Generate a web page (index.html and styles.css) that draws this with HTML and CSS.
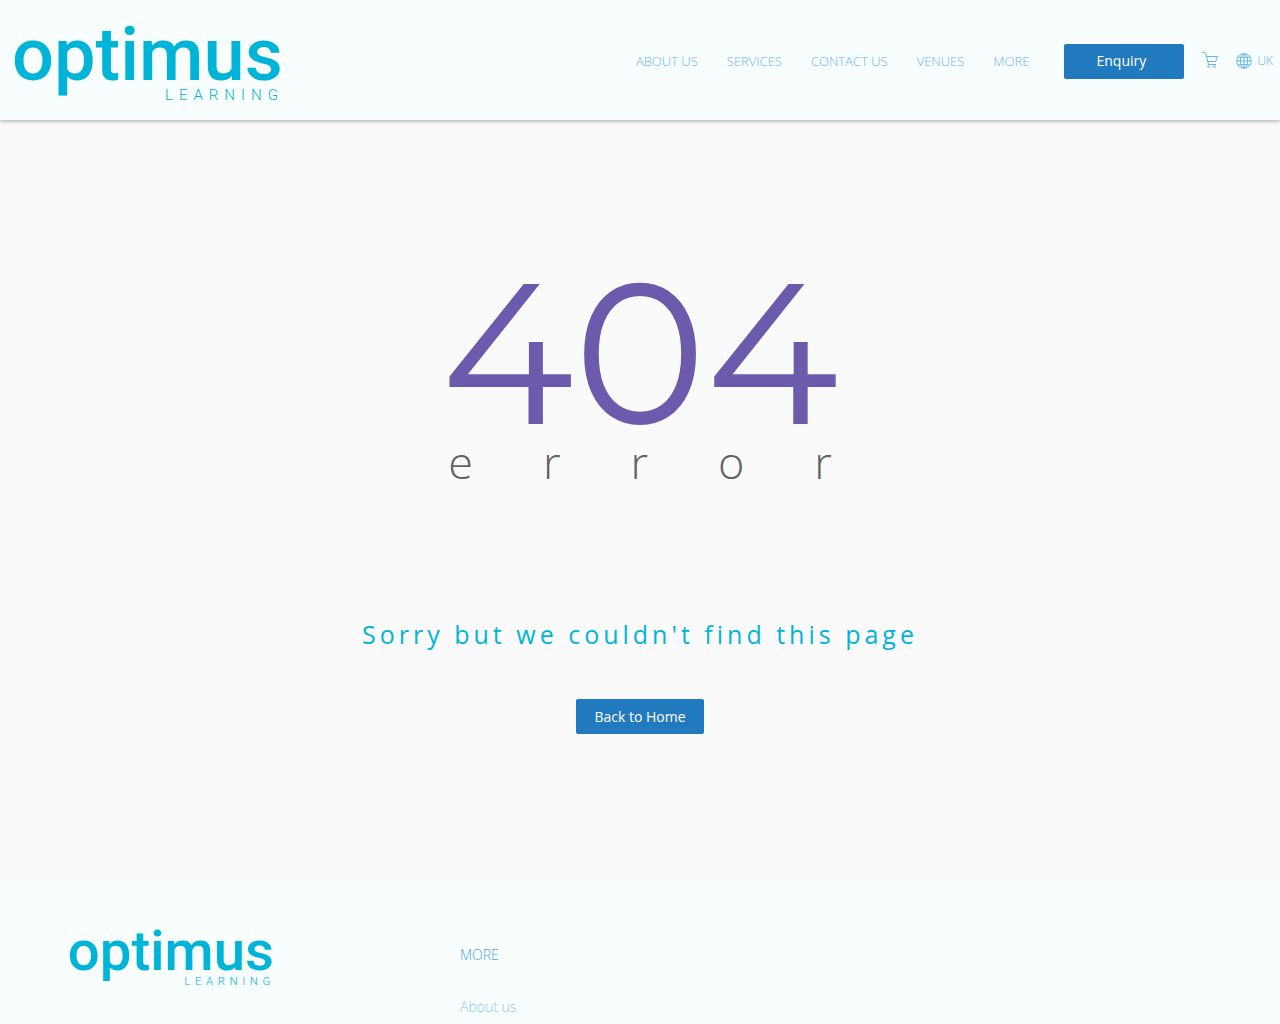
FILE: index.html
```html
<!DOCTYPE html>
<html lang="en">
<head>
    <meta charset="UTF-8">
    <meta name="viewport" content="width=device-width, initial-scale=1.0">
    <title>Page not found | Optimus Learning</title>
    <link rel="stylesheet" href="styles.css">
</head>
<body>
    <header class="header">
        <a class="logo" href="#">
            <svg viewBox="0 0 265 80" role="img" aria-label="Optimus Learning">
                <text class="logo-name" x="-3" y="60">optimus</text>
                <text class="logo-sub" x="150" y="80">LEARNING</text>
            </svg>
        </a>

        <nav class="nav">
            <a href="#">ABOUT US</a>
            <a href="#">SERVICES</a>
            <a href="#">CONTACT US</a>
            <a href="#">VENUES</a>
            <a href="#">MORE</a>
        </nav>

        <button class="btn btn-enquiry" type="button">Enquiry</button>

        <a class="cart" href="#" aria-label="Basket">
            <svg class="icon" viewBox="0 0 16 16">
                <path d="M0 .5h2.500q1 0 1.300 1L6.500 12.500h7.500M4.300 4.500h11.200l-1.800 5H5.800"/>
                <circle cx="6.500" cy="14.500" r="1"/>
                <circle cx="12.500" cy="14.500" r="1"/>
            </svg>
        </a>

        <a class="region" href="#">
            <svg class="icon" viewBox="0 0 16 16">
                <circle cx="8" cy="8" r="7.300"/>
                <ellipse cx="8" cy="8" rx="3.700" ry="7.300"/>
                <path d="M8 .7v14.600M.7 8h14.600M2 4.300h12M2 11.700h12"/>
            </svg>
            UK
        </a>
    </header>

    <!-- Error message -->
    <main class="error-page">
        <h1 class="error-code">404</h1>
        <p class="error-word">error</p>
        <h2 class="error-text">Sorry but we couldn't find this page</h2>
        <a class="btn" href="#">Back to Home</a>
    </main>

    <footer class="footer">
        <div class="container">
            <a class="logo logo-small" href="#">
                <svg viewBox="0 0 265 80" role="img" aria-label="Optimus Learning">
                    <text class="logo-name" x="-3" y="60">optimus</text>
                    <text class="logo-sub" x="150" y="80">LEARNING</text>
                </svg>
            </a>
            <div class="footer-links">
                <h3>MORE</h3>
                <a href="#">About us</a>
            </div>
        </div>
    </footer>
</body>
</html>
```
FILE: styles.css
```css
* {
    box-sizing: border-box;
}
body {
    font-family: "Open Sans", sans-serif;
    font-size: 14px;
    line-height: 20px;
    font-weight: 300;
    margin: 0;
    background-color: #fafafa;
}
a {
    color: #6bb5e6;
    text-decoration: none;
}
.header {
    display: flex;
    align-items: center;
    min-height: 120px;
    padding: 0 7px 0 15px;
    background-color: #f8fdfd;
    box-shadow: 0 1px 4px rgba(0, 0, 0, 0.35);
}
.logo {
    width: 265px;
}
.logo svg {
    display: block;
    width: 100%;
    overflow: visible;
}
.logo-small {
    width: 202px;
}
.logo-name {
    font-family: Roboto, sans-serif;
    font-size: 74px;
    font-weight: 500;
    fill: #00b4d8;
}
.logo-sub {
    font-family: Roboto, sans-serif;
    font-size: 15px;
    font-weight: 300;
    letter-spacing: 6px;
    fill: #00b4d8;
}
.nav {
    display: flex;
    gap: 29px;
    margin-left: auto;
    margin-right: 35px;
    padding-top: 2px;
    font-size: 13px;
}
.btn {
    padding: 0 18px;
    border: none;
    border-radius: 2px;
    background-color: #227abe;
    color: #fff;
    font-family: inherit;
    font-size: 14px;
    font-weight: 400;
    line-height: 35px;
    cursor: pointer;
}
.btn:hover {
    background-color: #1b659e;
}
.btn-enquiry {
    width: 120px;
    padding: 0 38px 2px 32px;
    margin-top: 3px;
    line-height: 33px;
}
.cart {
    margin-left: 18px;
}
.region {
    display: flex;
    align-items: center;
    gap: 5px;
    margin-left: 18px;
    padding-top: 2px;
    font-size: 12px;
}
.icon {
    display: block;
    width: 16px;
    height: 16px;
    fill: none;
    stroke: #6bb5e6;
    stroke-width: 1;
}
.error-page {
    display: flex;
    flex-direction: column;
    align-items: center;
    padding: 132px 15px 146px;
    text-align: center;
}
.error-code {
    margin: 0;
    color: #6c5bac;
    font-family: Montserrat, Inter, sans-serif;
    font-size: 200px;
    font-weight: 400;
    line-height: 200px;
}
.error-word {
    margin: 0 0 144px;
    padding-left: 70px;
    color: #626262;
    font-size: 45px;
    line-height: 20px;
    letter-spacing: 70px;
}
.error-text {
    margin: 0 0 47px;
    color: #00b4d8;
    font-size: 25px;
    font-weight: 400;
    line-height: 36px;
    letter-spacing: 4px;
}
.footer {
    background-color: #f8fdfd;
}
.container {
    display: grid;
    grid-template-columns: repeat(3, 1fr);
    align-items: start;
    max-width: 1170px;
    margin: 0 auto;
    padding: 44px 15px 7px;
}
.footer-links {
    padding: 21px 10px 0;
}
.footer-links h3 {
    margin: 0 0 32px;
    color: #4da3dc;
    font-size: 14px;
    font-weight: 300;
}
.footer-links a {
    color: #8cc6ee;
}
```
